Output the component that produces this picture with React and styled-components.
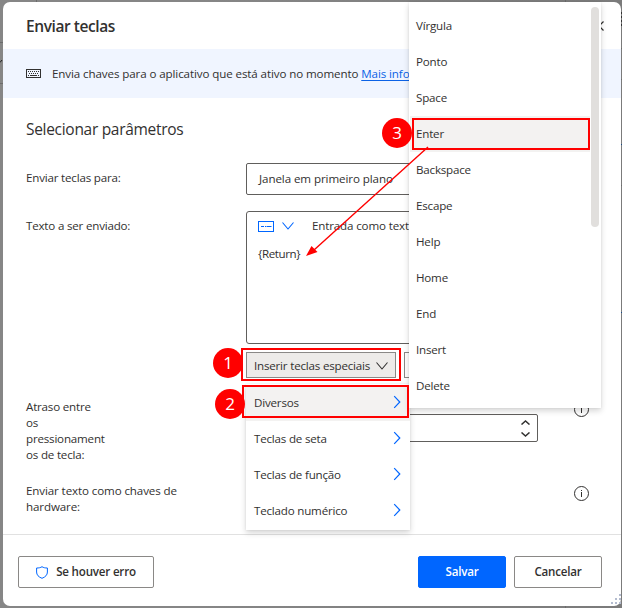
import React from "react";
import styled, { createGlobalStyle } from "styled-components";

const Global = createGlobalStyle`
  * { box-sizing: border-box; }
  body { margin: 0; background: #868686; overflow: hidden; }
  svg { display: block; flex: none; }
`;

const INK = "#323130";
const BLUE = "#0066ff";
const RED = "#ff0000";

const Backdrop = styled.div`
  position: relative;
  width: 622px;
  height: 608px;
  padding: 2px 1px 2px 3px;
  background: linear-gradient(90deg, #868686 200px, #7b7b7b 620px);
  overflow: hidden;
  font-family: "Open Sans", "Noto Sans", sans-serif;
  font-size: 11.6px;
  letter-spacing: -0.2px;
  line-height: 16px;
  color: ${INK};
`;

const BackdropLines = styled.svg`
  position: absolute;
  inset: 0;
`;

const Dialog = styled.div`
  position: relative;
  display: flex;
  flex-direction: column;
  width: 618px;
  height: 604px;
  background: #fff;
  border-radius: 7px;
`;

const Header = styled.div`
  display: flex;
  align-items: center;
  justify-content: space-between;
  height: 47px;
  padding: 1px 17px 0 23px;
`;

const Title = styled.div`
  font-size: 15.5px;
  font-weight: 600;
  letter-spacing: -0.42px;
`;

const InfoBand = styled.div`
  display: flex;
  align-items: center;
  gap: 11px;
  height: 49px;
  padding-left: 23px;
  background: #f0f5ff;
  letter-spacing: -0.11px;
  white-space: pre;
`;

const Link = styled.a`
  color: #0b62e6;
  text-decoration: underline;
  text-underline-offset: 2px;
`;

const Form = styled.div`
  display: flex;
  flex-direction: column;
  flex: 1;
  padding: 20px 23px 0 23px;
`;

const SectionTitle = styled.div`
  height: 45px;
  font-size: 15.5px;
  line-height: 22px;
  letter-spacing: -0.3px;
`;

const Row = styled.div`
  display: grid;
  grid-template-columns: 220px 292px 1fr;
  height: ${(p) => p.$h}px;
`;

const Label = styled.div`
  width: ${(p) => p.$w || 160}px;
  padding-top: 7px;
  letter-spacing: ${(p) => p.$track || -0.2}px;
  word-break: break-word;
`;

const Select = styled.div`
  height: 32px;
  padding: 7px 12px;
  border: 1px solid #605e5c;
  border-radius: 2px;
  letter-spacing: -0.09px;
`;

const FieldStack = styled.div`
  display: flex;
  flex-direction: column;
  gap: 8px;
`;

const TextArea = styled.div`
  height: 133px;
  padding: 5px 11px;
  border: 1px solid #605e5c;
  border-radius: 3px;
`;

const TextTools = styled.div`
  display: flex;
  align-items: center;
  height: 18px;
  gap: 8px;
  letter-spacing: -0.15px;
`;

const ToolCaption = styled.span`
  margin-left: 10px;
`;

const TextValue = styled.div`
  margin-top: 11px;
  letter-spacing: -0.4px;
`;

const ButtonRow = styled.div`
  display: flex;
  gap: 8px;
`;

const InsertButton = styled.div`
  display: flex;
  align-items: center;
  justify-content: space-between;
  width: ${(p) => p.$w}px;
  height: 26px;
  padding: 1px 7px 0;
  border: 1px solid #8a8886;
  background: ${(p) => (p.$active ? "#edebe9" : "#fff")};
`;

const NumberInput = styled.div`
  display: flex;
  justify-content: flex-end;
  align-items: center;
  height: 28px;
  margin-top: 22px;
  padding-right: 7px;
  border: 1px solid #605e5c;
  border-radius: 2px;
`;

const Spinner = styled.div`
  display: flex;
  flex-direction: column;
  gap: 7px;
`;

const InfoSlot = styled.div`
  display: flex;
  justify-content: flex-end;
  padding: ${(p) => p.$top}px 9px 0 0;
`;

const Footer = styled.div`
  display: flex;
  align-items: center;
  gap: 8px;
  height: 72px;
  padding: 2px 19px 0 15px;
  border-top: 1px solid #e1e1e1;
`;

const FooterButton = styled.div`
  display: flex;
  align-items: center;
  justify-content: center;
  gap: 8px;
  width: ${(p) => p.$w}px;
  height: 32px;
  padding-top: 1px;
  margin-right: ${(p) => (p.$pushRest ? "auto" : 0)};
  border: 1px solid ${(p) => (p.$primary ? BLUE : "#8a8886")};
  border-radius: 2px;
  background: ${(p) => (p.$primary ? BLUE : "#fff")};
  color: ${(p) => (p.$primary ? "#fff" : INK)};
  font-weight: 600;
`;

const Menu = styled.div`
  position: absolute;
  left: ${(p) => p.$x}px;
  top: ${(p) => p.$y}px;
  width: ${(p) => p.$w}px;
  height: ${(p) => p.$h}px;
  padding: ${(p) => p.$pad};
  background: #fff;
  box-shadow: 0 3px 6px rgba(0, 0, 0, 0.16), 0 0 2px rgba(0, 0, 0, 0.08);
`;

const MenuItem = styled.div`
  display: flex;
  align-items: center;
  justify-content: space-between;
  height: 36px;
  padding: 0 9px 0 ${(p) => p.$indent}px;
  background: ${(p) => (p.$active ? "#f3f2f1" : "transparent")};

  svg {
    margin-bottom: 2px;
  }
`;

const ScrollThumb = styled.div`
  position: absolute;
  left: 182px;
  top: 5px;
  width: 8px;
  height: 220px;
  border-radius: 4px;
  background: #e1dfdd;
`;

const Highlight = styled.div`
  position: absolute;
  left: ${(p) => p.$x}px;
  top: ${(p) => p.$y}px;
  width: ${(p) => p.$w}px;
  height: ${(p) => p.$h}px;
  border: 2px solid ${RED};
`;

const Step = styled.div`
  position: absolute;
  left: ${(p) => p.$x}px;
  top: ${(p) => p.$y}px;
  width: 30px;
  height: 30px;
  border-radius: 50%;
  background: ${RED};
  color: #fff;
  font-size: 17px;
  line-height: 29px;
  letter-spacing: 0;
  text-align: center;
`;

const Arrow = styled.svg`
  position: absolute;
  left: 300px;
  top: 140px;
`;

const Grip = styled.svg`
  position: absolute;
  right: 0;
  bottom: 1px;
`;

const KeyboardIcon = () => (
  <svg width="15" height="10" viewBox="0 0 15 10" fill="none" stroke={INK}>
    <rect x="0.5" y="0.5" width="14" height="8" />
    <path d="M2 2.5h11M3 4.5h10" strokeDasharray="1 1" />
    <path d="M2 6.5h1M4 6.5h7M12 6.5h1" />
  </svg>
);

const Chevron = ({ w, h, color = INK, up, stroke = 1.1 }) => (
  <svg width={w} height={h} viewBox={`0 0 ${w} ${h}`} fill="none" stroke={color} strokeWidth={stroke}>
    <path d={up ? `M.5 ${h - 0.5}L${w / 2} 1L${w - 0.5} ${h - 0.5}` : `M.5 .5L${w / 2} ${h - 1}L${w - 0.5} .5`} />
  </svg>
);

const ChevronRight = () => (
  <svg width="8" height="14" viewBox="0 0 8 14" fill="none" stroke={BLUE} strokeWidth="1.2">
    <path d="M1.2 1.2L6.8 7L1.2 12.8" />
  </svg>
);

const TextModeIcon = () => (
  <svg width="16" height="11" viewBox="0 0 16 11" fill="none" stroke={BLUE}>
    <rect x="0.5" y="0.5" width="15" height="10" />
    <path d="M3 5.5h3M7 5.5h1M8.5 5.5h5" />
  </svg>
);

const InfoIcon = () => (
  <svg width="15" height="15" viewBox="0 0 15 15" fill="none" stroke={INK}>
    <circle cx="7.5" cy="7.5" r="7" />
    <path d="M7.5 4v1M7.5 6v5" />
  </svg>
);

const ShieldIcon = () => (
  <svg width="12" height="13" viewBox="0 0 12 13" fill="none" stroke={BLUE}>
    <path d="M6 .7C4.6 1.7 2.8 2 .6 2v4c0 3 2 5 5.4 6.3C9.4 11 11.4 9 11.4 6V2C9.2 2 7.4 1.7 6 .7Z" />
  </svg>
);

const CloseIcon = () => (
  <svg width="10" height="10" viewBox="0 0 10 10" stroke={INK} strokeWidth="1.2">
    <path d="M.5 .5l9 9M9.5 .5l-9 9" />
  </svg>
);

const GRIP_DOTS = [[9, 0], [5, 4], [9, 4], [1, 8], [5, 8], [9, 8]];

const CATEGORIES = ["Diversos", "Teclas de seta", "Teclas de função", "Teclado numérico"];
const KEYS = ["Vírgula", "Ponto", "Space", "Enter", "Backspace", "Escape", "Help", "Home", "End", "Insert", "Delete"];

export default function App() {
  return (
    <Backdrop>
      <Global />
      <BackdropLines width="622" height="608" fill="none" stroke="#6c6c6c">
        <path d="M36.5 0V2M565.5 0V2M0 42.5H3M0 83.5H3M621 48.5H622M621 79.5H622M621 185.5H622M565.5 606V608" />
        <path d="M0 62.5L2 60" stroke="#222" />
        <path d="M621 144.5H622M621 312.5H622" stroke="#174a86" />
        <path d="M621.5 12V27" stroke="#333" strokeDasharray="2 2" />
      </BackdropLines>
      <Dialog>
        <Header>
          <Title>Enviar teclas</Title>
          <CloseIcon />
        </Header>
        <InfoBand>
          <KeyboardIcon />
          <span>
            Envia chaves para o aplicativo que está ativo no momento <Link>Mais info</Link>
          </span>
        </InfoBand>
        <Form>
          <SectionTitle>Selecionar parâmetros</SectionTitle>
          <Row $h={48}>
            <Label>Enviar teclas para:</Label>
            <Select>Janela em primeiro plano</Select>
          </Row>
          <Row $h={181}>
            <Label>Texto a ser enviado:</Label>
            <FieldStack>
              <TextArea>
                <TextTools>
                  <TextModeIcon />
                  <Chevron w={12} h={8} color={BLUE} />
                  <ToolCaption>Entrada como text</ToolCaption>
                </TextTools>
                <TextValue>{"{Return}"}</TextValue>
              </TextArea>
              <ButtonRow>
                <InsertButton $w={150} $active>
                  Inserir teclas especiais
                  <Chevron w={12} h={8} />
                </InsertButton>
                <InsertButton $w={134} />
              </ButtonRow>
            </FieldStack>
          </Row>
          <Row $h={84}>
            <Label $w={80}>
              Atraso entre
              <br />
              os
              <br />
              pressionamentos de tecla:
            </Label>
            <NumberInput>
              <Spinner>
                <Chevron w={9} h={5} up stroke={1.5} />
                <Chevron w={9} h={5} stroke={1.5} />
              </Spinner>
            </NumberInput>
            <InfoSlot $top={10}>
              <InfoIcon />
            </InfoSlot>
          </Row>
          <Row $h={40}>
            <Label $track={-0.12}>Enviar texto como chaves de hardware:</Label>
            <div />
            <InfoSlot $top={10}>
              <InfoIcon />
            </InfoSlot>
          </Row>
        </Form>
        <Footer>
          <FooterButton $w={136} $pushRest>
            <ShieldIcon />
            Se houver erro
          </FooterButton>
          <FooterButton $w={88} $primary>Salvar</FooterButton>
          <FooterButton $w={88}>Cancelar</FooterButton>
        </Footer>
        <Grip width="11" height="11" fill="#b4bccf">
          {GRIP_DOTS.map(([x, y]) => (
            <rect key={`${x}-${y}`} x={x} y={y} width="2" height="2" />
          ))}
        </Grip>
      </Dialog>

      <Menu $x={246} $y={384} $w={164} $h={146} $pad="1px 0 0 0">
        {CATEGORIES.map((name, i) => (
          <MenuItem key={name} $indent={8} $active={i === 0}>
            {name}
            <ChevronRight />
          </MenuItem>
        ))}
      </Menu>
      <Menu $x={409} $y={2} $w={192} $h={406} $pad="6px 11px 0 1px">
        {KEYS.map((name) => (
          <MenuItem key={name} $indent={6} $active={name === "Enter"}>
            {name}
          </MenuItem>
        ))}
        <ScrollThumb />
      </Menu>

      <Highlight $x={412} $y={118} $w={178} $h={32} />
      <Highlight $x={241} $y={348} $w={160} $h={33} />
      <Highlight $x={242} $y={385} $w={167} $h={33} />
      <Arrow width="134" height="124">
        <path d="M128 7L14 110" stroke={RED} strokeWidth="1.4" />
        <path d="M6 116L11.5 106L17.5 112Z" fill={RED} />
      </Arrow>
      <Step $x={382} $y={118}>3</Step>
      <Step $x={213} $y={348}>1</Step>
      <Step $x={215} $y={389}>2</Step>
    </Backdrop>
  );
}
